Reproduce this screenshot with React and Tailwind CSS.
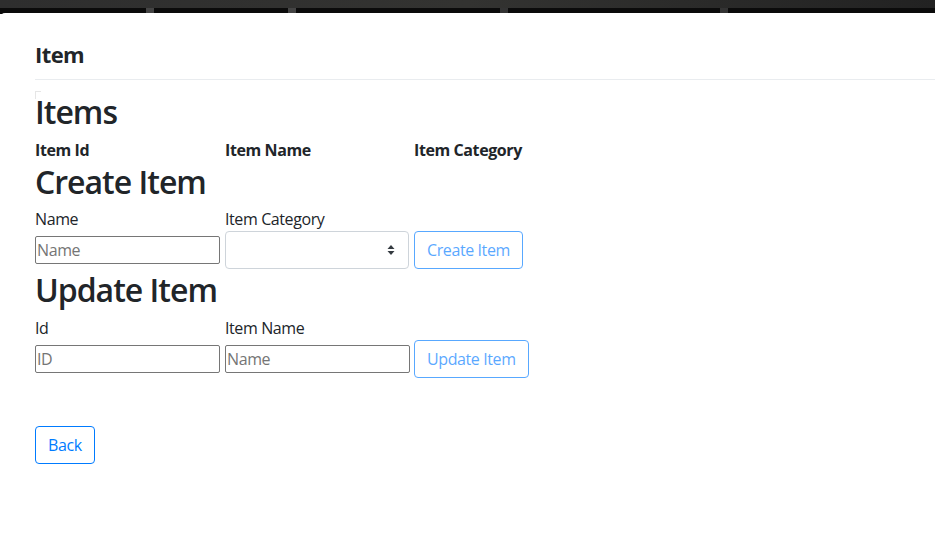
import React from "react";

function SelectArrows() {
  return (
    <svg width="8" height="12" viewBox="0 0 8 12" className="absolute right-[13px] top-1/2 -translate-y-1/2">
      <path d="M4 1 L7.5 5 L0.5 5 Z" fill="#343a40" />
      <path d="M4 11 L7.5 7 L0.5 7 Z" fill="#343a40" />
    </svg>
  );
}

export default function App() {
  return (
    <div className="w-[935px] h-[545px] overflow-hidden bg-white tracking-[-0.4px]" style={{ fontFamily: '"Open Sans", "Noto Sans", sans-serif' }}>
      <div className="h-[14px] bg-[#0b0b0b] flex flex-col">
        <div className="h-[8px] bg-gradient-to-r from-[#2e2e2e] via-[#333331] to-[#222] " />
        <div className="flex-1 relative">
          <div className="absolute left-[146px] top-0 w-[8px] h-[5px] bg-[#444]" />
          <div className="absolute left-[288px] top-0 w-[8px] h-[5px] bg-[#444]" />
          <div className="absolute left-[500px] top-0 w-[8px] h-[5px] bg-[#333]" />
          <div className="absolute left-[720px] top-0 w-[8px] h-[5px] bg-[#333]" />
        </div>
      </div>
      <div className="bg-white rounded-tl-[5px] -mt-[1px] pl-[35px] text-[#212529]">
        <div className="h-[67px] border-b border-[#e9ecef] flex items-center pt-[16px]">
          <h5 className="text-[22px] font-bold leading-none tracking-[-0.6px]">Item</h5>
        </div>
        <div className="pt-[11px]">
          <div className="w-[6px] h-[8px] border-l border-t border-[#e6e6e6]" />
          <h2 className="text-[32px] leading-[38px] -mt-[6px] font-semibold tracking-[-1px]">Items</h2>
          <div className="flex text-[16px] font-bold leading-[24px] mt-[7px]">
            <div className="w-[190px]">Item Id</div>
            <div className="w-[189px]">Item Name</div>
            <div className="w-[189px]">Item Category</div>
          </div>
          <h2 className="text-[32px] leading-[38px] font-semibold tracking-[-1px] mt-[1px]">Create Item</h2>
          <div className="flex items-end mt-[6px]">
            <div className="flex flex-col w-[190px]">
              <label className="text-[16px] leading-[24px] mb-[5px]">Name</label>
              <input placeholder="Name" className="w-[185px] h-[28px] border border-[#767676] rounded-[2px] px-[1px] text-[16px] placeholder:text-[#757575] outline-none mb-[5px]" />
            </div>
            <div className="flex flex-col w-[189px]">
              <label className="text-[16px] leading-[24px]">Item Category</label>
              <div className="relative w-[184px] h-[38px] border border-[#ced4da] rounded-[4px] bg-white">
                <SelectArrows />
              </div>
            </div>
            <button className="h-[38px] px-[12px] border border-[#007bff] rounded-[4px] text-[16px] text-[#007bff] opacity-65 bg-white">Create Item</button>
          </div>
          <h2 className="text-[32px] leading-[38px] font-semibold tracking-[-1px] mt-[2px]">Update Item</h2>
          <div className="flex items-end mt-[7px]">
            <div className="flex flex-col w-[190px]">
              <label className="text-[16px] leading-[24px] mb-[5px]">Id</label>
              <input placeholder="ID" className="w-[185px] h-[28px] border border-[#767676] rounded-[2px] px-[1px] text-[16px] placeholder:text-[#757575] outline-none mb-[5px]" />
            </div>
            <div className="flex flex-col w-[189px]">
              <label className="text-[16px] leading-[24px] mb-[5px]">Item Name</label>
              <input placeholder="Name" className="w-[185px] h-[28px] border border-[#767676] rounded-[2px] px-[1px] text-[16px] placeholder:text-[#757575] outline-none mb-[5px]" />
            </div>
            <button className="h-[38px] px-[12px] border border-[#007bff] rounded-[4px] text-[16px] text-[#007bff] opacity-65 bg-white">Update Item</button>
          </div>
          <button className="mt-[48px] h-[38px] px-[12px] border border-[#007bff] rounded-[4px] text-[16px] text-[#007bff] bg-white">Back</button>
        </div>
      </div>
    </div>
  );
}
